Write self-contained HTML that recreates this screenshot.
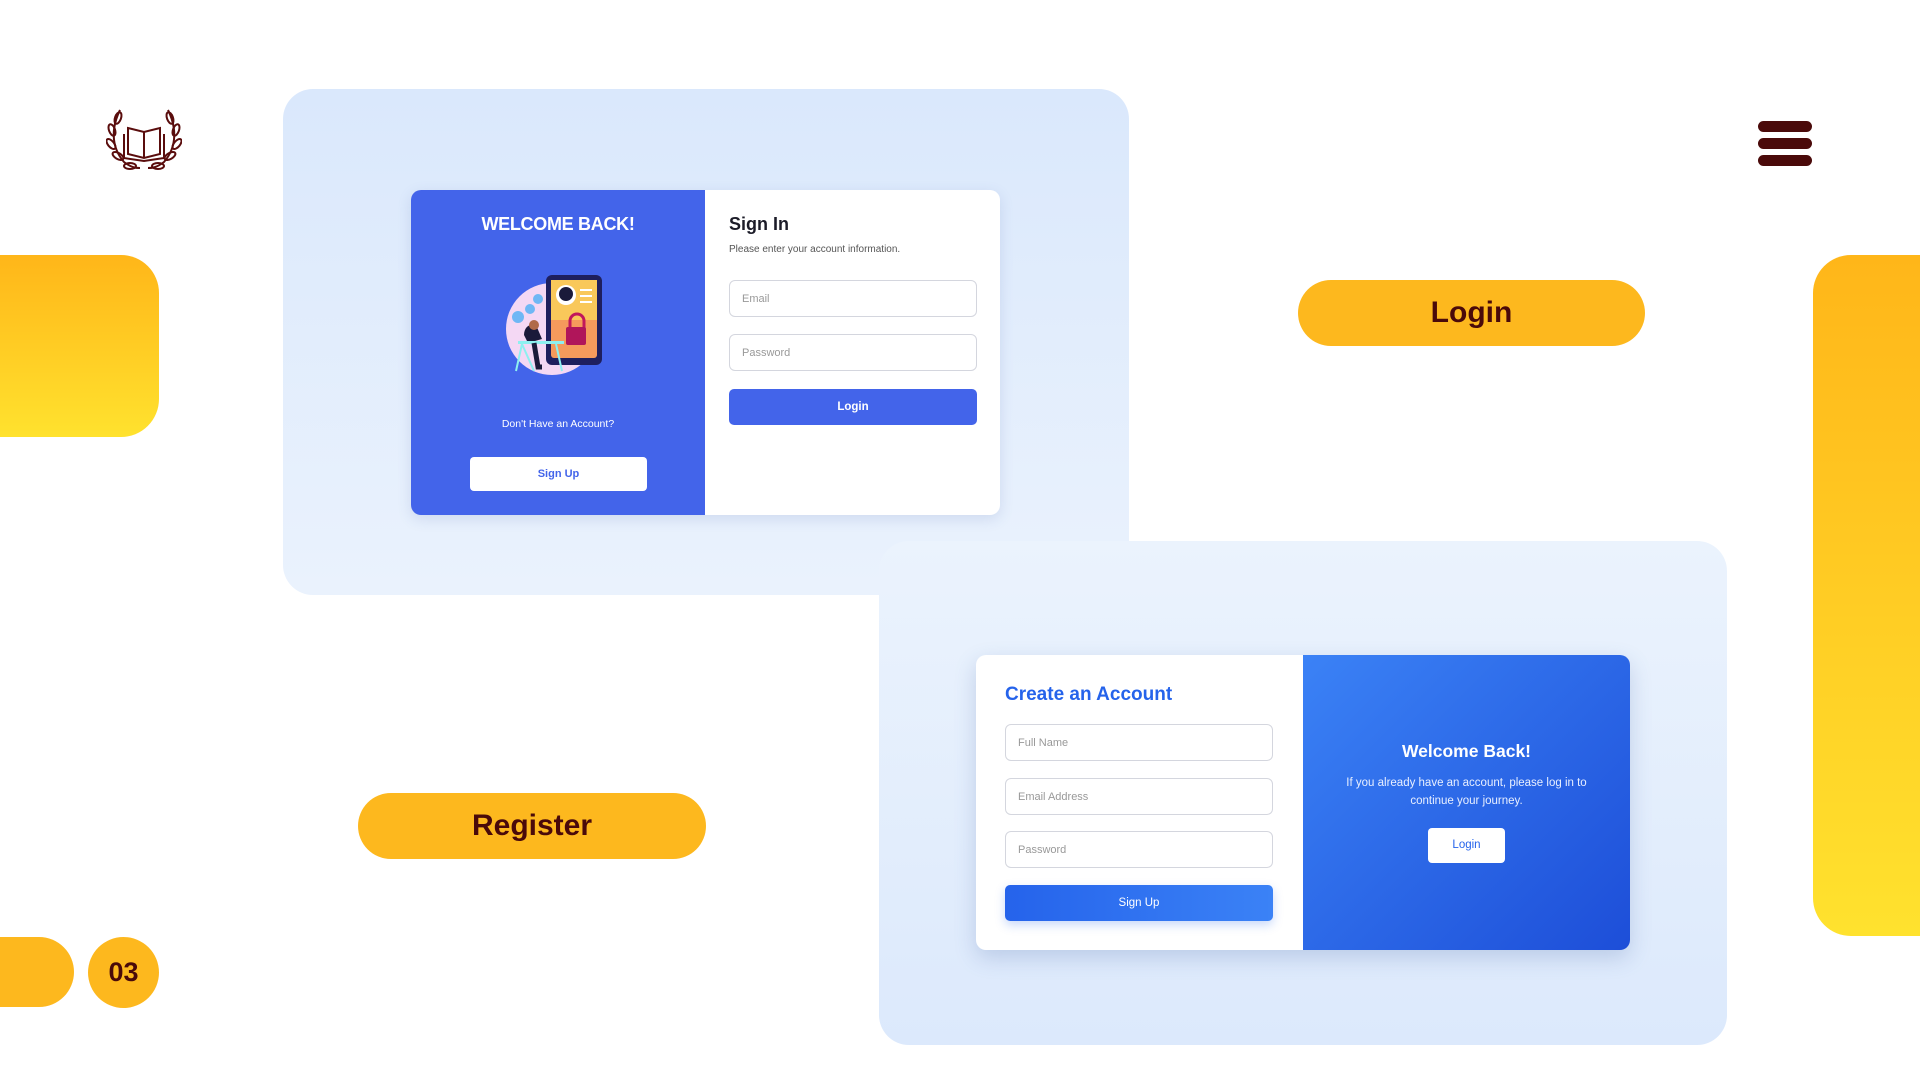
<!DOCTYPE html>
<html><head><meta charset="utf-8"><style>
*{margin:0;padding:0;box-sizing:border-box}
body{width:1920px;height:1080px;background:#fff;position:relative;overflow:hidden;font-family:"Liberation Sans",Arial,sans-serif}
.abs{position:absolute}
.yel{background:linear-gradient(180deg,#ffb619,#ffe22e)}
.pill{background:#fdb81e;border-radius:40px;color:#4a0a0a;font-weight:bold;display:flex;align-items:center;justify-content:center;font-family:"Liberation Sans",sans-serif}
.inp{position:absolute;border:1px solid #d4d6de;border-radius:6px;background:#fff;color:#999;font-size:11px;padding-left:12px;display:flex;align-items:center}
</style></head><body>
<svg class="abs" style="left:106px;top:106px" width="76" height="66" viewBox="0 0 76 66" fill="none" stroke="#5a0d0d" stroke-width="2">
<path d="M22 22 L38 26 L54 22 L54 48 L38 52 L22 48 Z"/><path d="M38 26 V52"/><path d="M18 28 V52 L38 55 L58 52 V28"/>
<path d="M14 4 C6 20 4 40 18 56 C26 62 30 62 34 62"/><path d="M62 4 C70 20 72 40 58 56 C50 62 46 62 42 62"/>
<ellipse cx="12" cy="12" rx="3" ry="6" transform="rotate(20 12 12)"/><ellipse cx="6" cy="24" rx="3" ry="6" transform="rotate(-20 6 24)"/><ellipse cx="5" cy="38" rx="3" ry="6" transform="rotate(-40 5 38)"/><ellipse cx="12" cy="50" rx="3" ry="6" transform="rotate(-60 12 50)"/><ellipse cx="24" cy="60" rx="6" ry="3"/>
<ellipse cx="64" cy="12" rx="3" ry="6" transform="rotate(-20 64 12)"/><ellipse cx="70" cy="24" rx="3" ry="6" transform="rotate(20 70 24)"/><ellipse cx="71" cy="38" rx="3" ry="6" transform="rotate(40 71 38)"/><ellipse cx="64" cy="50" rx="3" ry="6" transform="rotate(60 64 50)"/><ellipse cx="52" cy="60" rx="6" ry="3"/>
</svg>
<div class="abs" style="left:1758px;top:121px;width:54px;height:11px;background:#4a0a0a;border-radius:6px"></div>
<div class="abs" style="left:1758px;top:138px;width:54px;height:11px;background:#4a0a0a;border-radius:6px"></div>
<div class="abs" style="left:1758px;top:155px;width:54px;height:11px;background:#4a0a0a;border-radius:6px"></div>
<div class="abs yel" style="left:0;top:255px;width:159px;height:182px;border-radius:0 38px 38px 0"></div>
<div class="abs yel" style="left:1813px;top:255px;width:107px;height:681px;border-radius:38px 0 0 38px"></div>
<div class="abs" style="left:0;top:937px;width:74px;height:70px;border-radius:0 35px 35px 0;background:#fdb81e"></div>
<div class="abs pill" style="left:88px;top:937px;width:71px;height:71px;border-radius:50%;font-size:27px">03</div>
<div class="abs pill" style="left:1298px;top:280px;width:347px;height:66px;font-size:30px">Login</div>
<div class="abs pill" style="left:358px;top:793px;width:348px;height:66px;font-size:30px">Register</div>
<div class="abs" style="left:283px;top:89px;width:846px;height:506px;border-radius:30px;background:linear-gradient(180deg,#dae8fc,#eaf2fd)"></div>
<div class="abs" style="left:879px;top:541px;width:848px;height:504px;border-radius:30px;background:linear-gradient(180deg,#ebf3fd,#dce9fc)"></div>
<div class="abs" style="left:411px;top:190px;width:589px;height:325px;border-radius:10px;background:#fff;box-shadow:0 4px 14px rgba(60,90,160,.15);overflow:hidden">
 <div class="abs" style="left:0;top:0;width:294px;height:325px;background:#4364ea;color:#fff;text-align:center">
  <div style="margin-top:24px;font-size:18px;font-weight:bold;letter-spacing:-0.3px">WELCOME BACK!</div>
  <svg class="abs" style="left:93px;top:79px" width="108" height="108" viewBox="0 0 108 108">
   <circle cx="48" cy="60" r="46" fill="#f4d8f4"/>
   <rect x="42" y="6" width="56" height="90" rx="6" fill="#1e1f5e"/>
   <rect x="47" y="11" width="46" height="78" rx="3" fill="#f59a5c"/>
   <rect x="47" y="11" width="46" height="40" fill="#f9c85a"/>
   <circle cx="62" cy="26" r="10" fill="#fff"/><circle cx="62" cy="25" r="7" fill="#1a1a3a"/>
   <rect x="76" y="20" width="12" height="2" fill="#fff"/><rect x="76" y="26" width="12" height="2" fill="#fff"/><rect x="76" y="32" width="12" height="2" fill="#fff"/>
   <path d="M66 60 v-8 a7 7 0 0 1 14 0 v8" stroke="#c2185b" stroke-width="3" fill="none"/>
   <rect x="62" y="58" width="20" height="18" rx="2" fill="#b0155a"/>
   <circle cx="26" cy="40" r="5" fill="#6fb7f5"/><circle cx="34" cy="30" r="5" fill="#6fb7f5"/><circle cx="14" cy="48" r="6" fill="#6fb7f5"/>
   <path d="M20 66 c0-8 6-12 12-10 l6 14 -14 4z" fill="#1a1a3a"/><circle cx="30" cy="56" r="5" fill="#b06a4a"/>
   <rect x="14" y="72" width="46" height="3" fill="#8ef0f0"/><path d="M18 75 L12 102 M52 75 L58 102 M18 75 L30 102" stroke="#8ef0f0" stroke-width="2"/>
   <path d="M30 74 l4 24 4 0" stroke="#1a1a3a" stroke-width="5" fill="none"/>
  </svg>
  <div class="abs" style="left:0;width:294px;top:228px;font-size:10.5px">Don't Have an Account?</div>
  <div class="abs" style="left:59px;top:267px;width:177px;height:34px;background:#fff;border-radius:4px;color:#4364ea;font-weight:bold;font-size:11px;line-height:34px">Sign Up</div>
 </div>
 <div class="abs" style="left:318px;top:24px;font-size:18px;font-weight:bold;color:#1c1c28">Sign In</div>
 <div class="abs" style="left:318px;top:54px;font-size:10px;color:#555">Please enter your account information.</div>
 <div class="inp" style="left:318px;top:90px;width:248px;height:37px">Email</div>
 <div class="inp" style="left:318px;top:144px;width:248px;height:37px">Password</div>
 <div class="abs" style="left:318px;top:199px;width:248px;height:36px;background:#4364ea;border-radius:5px;color:#fff;font-weight:bold;font-size:11.5px;text-align:center;line-height:36px">Login</div>
</div>
<div class="abs" style="left:976px;top:655px;width:654px;height:295px;border-radius:10px;background:#fff;box-shadow:0 8px 22px rgba(60,90,160,.22);overflow:hidden">
 <div class="abs" style="left:29px;top:29px;font-size:19px;font-weight:bold;color:#2563eb">Create an Account</div>
 <div class="inp" style="left:29px;top:69px;width:268px;height:37px">Full Name</div>
 <div class="inp" style="left:29px;top:123px;width:268px;height:37px">Email Address</div>
 <div class="inp" style="left:29px;top:176px;width:268px;height:37px">Password</div>
 <div class="abs" style="left:29px;top:230px;width:268px;height:36px;border-radius:5px;background:linear-gradient(90deg,#2563eb,#3b82f6);color:#fff;font-size:11.5px;text-align:center;line-height:36px;box-shadow:0 4px 10px rgba(37,99,235,.25)">Sign Up</div>
 <div class="abs" style="left:327px;top:0;width:327px;height:295px;background:linear-gradient(135deg,#3b82f6,#1d4ed8);color:#fff;text-align:center">
  <div style="margin-top:86px;font-size:17.5px;font-weight:bold">Welcome Back!</div>
  <div style="margin:12px auto 0;width:260px;font-size:11.5px;line-height:18px;color:#e8efff">If you already have an account, please log in to continue your journey.</div>
  <div class="abs" style="left:125px;top:173px;width:77px;height:35px;background:#fff;border-radius:4px;color:#2563eb;font-size:11.5px;line-height:35px">Login</div>
 </div>
</div>
</body></html>
